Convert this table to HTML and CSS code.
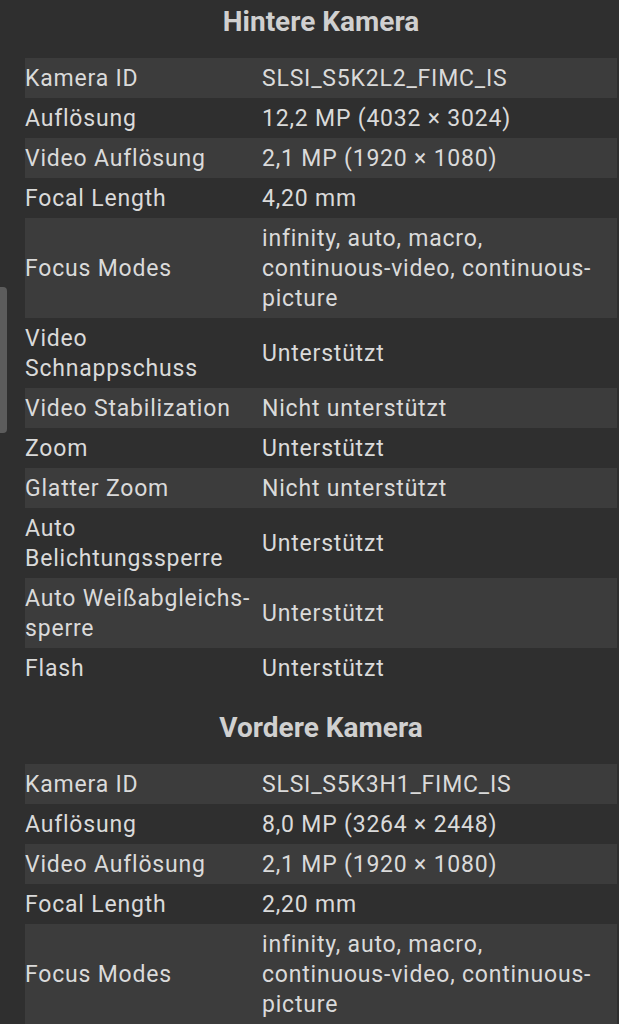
FILE: index.html
```html
<!DOCTYPE html>
<html lang="de">
  <head>
    <title>Kamera</title>
    <meta charset="UTF-8">
    <meta name="viewport" content="width=device-width, initial-scale=1.0">
    <link rel="stylesheet" href="styles.css">
  </head>
  <body>
    <div class="scrollThumb"></div>
    <div id="content">
      <h2>Hintere Kamera</h2>
      <table class="info">
        <tr><td>Kamera ID</td><td>SLSI_S5K2L2_FIMC_IS</td></tr>
        <tr><td>Auflösung</td><td>12,2 MP (4032 × 3024)</td></tr>
        <tr><td>Video Auflösung</td><td>2,1 MP (1920 × 1080)</td></tr>
        <tr><td>Focal Length</td><td>4,20 mm</td></tr>
        <tr><td>Focus Modes</td><td>infinity, auto, macro, continuous-video, continuous-picture</td></tr>
        <tr><td>Video Schnappschuss</td><td>Unterstützt</td></tr>
        <tr><td>Video Stabilization</td><td>Nicht unterstützt</td></tr>
        <tr><td>Zoom</td><td>Unterstützt</td></tr>
        <tr><td>Glatter Zoom</td><td>Nicht unterstützt</td></tr>
        <tr><td>Auto Belichtungssperre</td><td>Unterstützt</td></tr>
        <tr><td>Auto Weißabgleichs&shy;sperre</td><td>Unterstützt</td></tr>
        <tr><td>Flash</td><td>Unterstützt</td></tr>
      </table>

      <h2>Vordere Kamera</h2>
      <table class="info">
        <tr><td>Kamera ID</td><td>SLSI_S5K3H1_FIMC_IS</td></tr>
        <tr><td>Auflösung</td><td>8,0 MP (3264 × 2448)</td></tr>
        <tr><td>Video Auflösung</td><td>2,1 MP (1920 × 1080)</td></tr>
        <tr><td>Focal Length</td><td>2,20 mm</td></tr>
        <tr><td>Focus Modes</td><td>infinity, auto, macro, continuous-video, continuous-picture</td></tr>
      </table>
    </div>
  </body>
</html>
```

FILE: styles.css
```css
* {
  box-sizing: border-box;
}
body,html{
  height:100%;
}
body {
  font-family: Roboto, "Liberation Sans", sans-serif;
  margin: 0;
  background:#2f2f2f;
  color:#dadada;
  overflow:hidden;
}
/* fake scroll thumb on the left edge */
.scrollThumb{
  position:absolute;
  left:0;
  top:287px;
  width:7px;
  height:146px;
  background:#5c5c5c;
  border-radius:0 4px 4px 0;
}
#content{
  padding:0 2px 0 25px;
}
h2{
  margin:0;
  font-size:28px;
  font-weight:bold;
  text-align:center;
  color:#d0d0d0;
  line-height:34px;
  padding:5px 0 19px;
}
.info{
  width:100%;
  border-collapse:collapse;
  font-size:23px;
  letter-spacing:0.8px;
  line-height:30px;
  margin-bottom:18px;
}
.info td{
  padding:6px 0 4px;
  vertical-align:middle;
}
.info td:first-child{
  width:237px;
  padding-right:4px;
}
.info tr:nth-child(odd){
  background:#3c3c3c;
}
```
